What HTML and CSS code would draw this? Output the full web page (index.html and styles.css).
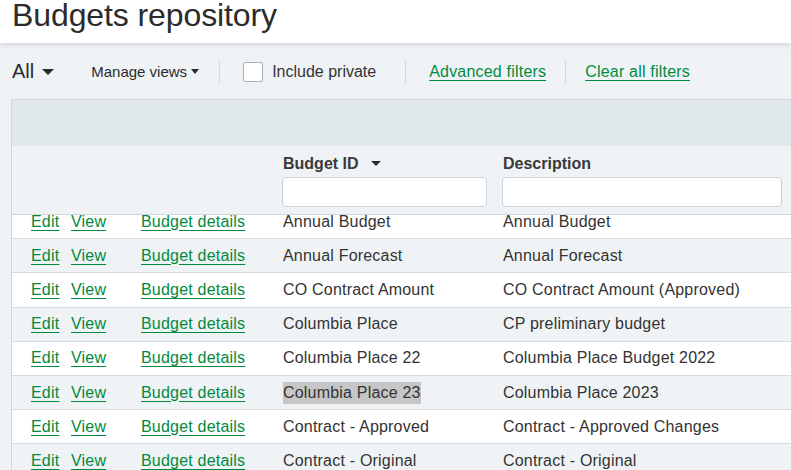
FILE: index.html
```html
<!doctype html>
<html>
<head>
    <meta charset="UTF-8">
    <title>Budgets repository</title>
    <meta name="viewport" content="width=device-width, initial-scale=1">
    <link rel="stylesheet" href="styles.css">
</head>
<body>
    <header class="page-title">
        <h1>Budgets repository</h1>
    </header>

    <div class="toolbar">
        <button type="button" class="view-select">All <span class="caret caret-lg"></span></button>
        <button type="button" class="manage-views">Manage views <span class="caret caret-sm"></span></button>
        <span class="sep"></span>
        <label class="private"><span class="box"></span>Include private</label>
        <span class="sep sep-2"></span>
        <a href="#" class="tool-link adv">Advanced filters</a>
        <span class="sep sep-3"></span>
        <a href="#" class="tool-link clear">Clear all filters</a>
    </div>

    <div class="grid">
        <div class="band"></div>
        <div class="head-row">
            <div></div>
            <div class="head-cell">
                <div class="head-label">Budget ID <span class="caret caret-md"></span></div>
                <input type="text" class="filter filter-id">
            </div>
            <div class="head-cell">
                <div class="head-label">Description</div>
                <input type="text" class="filter filter-desc">
            </div>
        </div>

        <div class="rows-wrap">
            <div class="rows">
                <div class="row">
                    <div class="actions"><a href="#" class="edit">Edit</a><a href="#" class="view">View</a><a href="#">Budget details</a></div>
                    <div class="cell">Annual Budget</div>
                    <div class="cell">Annual Budget</div>
                </div>
                <div class="row">
                    <div class="actions"><a href="#" class="edit">Edit</a><a href="#" class="view">View</a><a href="#">Budget details</a></div>
                    <div class="cell">Annual Forecast</div>
                    <div class="cell">Annual Forecast</div>
                </div>
                <div class="row">
                    <div class="actions"><a href="#" class="edit">Edit</a><a href="#" class="view">View</a><a href="#">Budget details</a></div>
                    <div class="cell">CO Contract Amount</div>
                    <div class="cell">CO Contract Amount (Approved)</div>
                </div>
                <div class="row">
                    <div class="actions"><a href="#" class="edit">Edit</a><a href="#" class="view">View</a><a href="#">Budget details</a></div>
                    <div class="cell">Columbia Place</div>
                    <div class="cell">CP preliminary budget</div>
                </div>
                <div class="row">
                    <div class="actions"><a href="#" class="edit">Edit</a><a href="#" class="view">View</a><a href="#">Budget details</a></div>
                    <div class="cell">Columbia Place 22</div>
                    <div class="cell">Columbia Place Budget 2022</div>
                </div>
                <div class="row">
                    <div class="actions"><a href="#" class="edit">Edit</a><a href="#" class="view">View</a><a href="#">Budget details</a></div>
                    <div class="cell"><span class="selected">Columbia Place 23</span></div>
                    <div class="cell">Columbia Place 2023</div>
                </div>
                <div class="row">
                    <div class="actions"><a href="#" class="edit">Edit</a><a href="#" class="view">View</a><a href="#">Budget details</a></div>
                    <div class="cell">Contract - Approved</div>
                    <div class="cell">Contract - Approved Changes</div>
                </div>
                <div class="row">
                    <div class="actions"><a href="#" class="edit">Edit</a><a href="#" class="view">View</a><a href="#">Budget details</a></div>
                    <div class="cell">Contract - Original</div>
                    <div class="cell">Contract - Original</div>
                </div>
            </div>
        </div>
    </div>
</body>
</html>
```

FILE: styles.css
```css
body {
    margin: 0;
    font-family: "Liberation Sans", Arial, sans-serif;
    color: #333;
    background-color: #f0f3f6;
    height: 470px;
    overflow: hidden;
}
a {
    color: #008a3e;
    text-decoration: underline;
    text-underline-offset: 3px;
}

/* title */
.page-title {
    position: relative;
    z-index: 1;
    height: 43px;
    background-color: #fff;
    box-shadow: 0 2px 5px rgba(0, 0, 0, 0.12);
}
.page-title h1 {
    margin: 0;
    padding-left: 12px;
    font-size: 32px;
    font-weight: normal;
    line-height: 31px;
    letter-spacing: -0.1px;
    color: #2b2b2b;
}

/* toolbar */
.toolbar {
    display: flex;
    align-items: center;
    height: 56px;
    padding: 1px 0 0 12px;
    box-sizing: border-box;
}
.toolbar button {
    display: flex;
    align-items: center;
    padding: 0;
    border: none;
    background: none;
    font-family: inherit;
    color: #2b2b2b;
}
.view-select {
    font-size: 20px;
}
.manage-views {
    margin-left: 37px;
    font-size: 15px;
}
.caret {
    display: inline-block;
    width: 0;
    height: 0;
    border-style: solid;
    border-color: #2b2b2b transparent transparent transparent;
}
.caret-lg {
    margin-left: 8px;
    border-width: 6px 6px 0 6px;
}
.caret-sm {
    margin-left: 4px;
    border-width: 5px 4px 0 4px;
}
.caret-md {
    margin-left: 8px;
    margin-bottom: 2px;
    vertical-align: middle;
    border-width: 5px 5px 0 5px;
}
.sep {
    width: 1px;
    height: 24px;
    margin-left: 20px;
    background-color: #d3d9de;
}
.private {
    display: flex;
    align-items: center;
    margin-left: 23px;
    font-size: 16px;
    color: #333;
}
.private .box {
    width: 18px;
    height: 18px;
    margin-right: 9px;
    border: 1px solid #a9b1b6;
    border-radius: 2px;
    background-color: #fff;
}
.sep-2 {
    margin-left: 29px;
}
.tool-link {
    font-size: 16px;
    letter-spacing: 0.2px;
}
.adv {
    margin-left: 23px;
}
.sep-3 {
    margin-left: 19px;
}
.clear {
    margin-left: 19px;
}

/* table */
.grid {
    margin-left: 11px;
    border-left: 1px solid #cfd7dc;
    border-top: 1px solid #cfd7dc;
}
.band {
    height: 46px;
    background-color: #e2e9ed;
}
.head-row,
.row {
    display: grid;
    grid-template-columns: 270px 220px 1fr;
}
.head-row {
    height: 68px;
    border-bottom: 1px solid #cfd7dc;
    background-color: #f0f3f6;
}
.head-label {
    padding: 8px 0 0 1px;
    font-size: 16px;
    font-weight: bold;
    line-height: 19px;
    color: #3a3a3a;
}
.filter {
    display: block;
    height: 30px;
    margin-top: 4px;
    border: 1px solid #cdd5da;
    border-radius: 4px;
    background-color: #fff;
    box-sizing: border-box;
}
.filter-id {
    width: 205px;
}
.filter-desc {
    width: 280px;
}
.rows-wrap {
    height: 260px;
    overflow: hidden;
}
.rows {
    margin-top: -10px;
}
.row {
    height: 33.2px;
    align-items: center;
    border-bottom: 1px solid #d5dce1;
    background-color: #fff;
    font-size: 16px;
    letter-spacing: 0.2px;
}
.row:nth-child(even) {
    background-color: #f0f3f6;
}
.actions {
    display: flex;
    padding-left: 19px;
}
.actions .edit {
    width: 40px;
}
.actions .view {
    width: 70px;
}
.cell {
    padding-left: 1px;
    white-space: nowrap;
}
.selected {
    display: inline-block;
    line-height: 22px;
    background-color: #c6c6c6;
}
```
